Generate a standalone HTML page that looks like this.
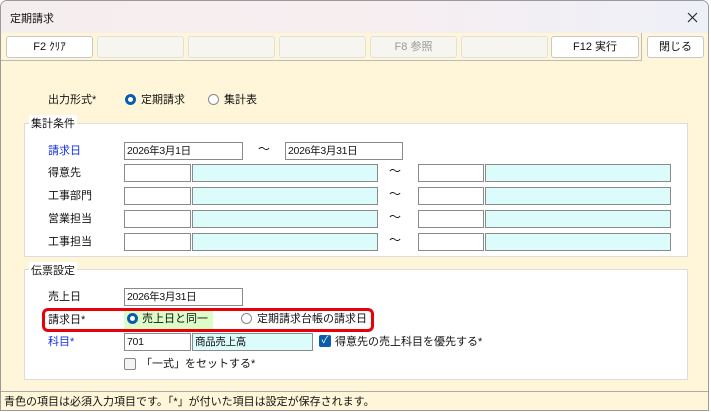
<!DOCTYPE html>
<html><head><meta charset="utf-8"><style>
*{box-sizing:border-box;margin:0;padding:0}
body{width:711px;height:412px;background:#fff;font-family:"Liberation Sans","Noto Sans CJK JP",sans-serif;font-size:11px;color:#111;position:relative;overflow:hidden}
.a{position:absolute}
.win{left:0;top:0;width:709px;height:411px;border:1px solid #9a9a9a;border-radius:7px 7px 0 0;overflow:hidden;background:#fff6da}
.title{left:0;top:0;width:709px;height:32px;background:linear-gradient(90deg,#f5eeee,#f7eef0 50%,#eef0f8);}
.tb{left:0;top:32px;width:641px;height:28px;background:#fff6da;border-right:1px solid #bbb;border-bottom:1px solid #bbb}
.btn{top:35px;height:22px;background:#f7f5f0;border:1px solid #e2e0da;border-radius:3px;text-align:center;line-height:20px;font-size:11px;color:#999}
.btn.on{background:#fff;border-color:#c8c8c8;color:#111}
.grp{background:#fff;border:1px solid #dcdcdc}
.gl{background:#fff;padding:0 2px;font-size:11px}
.in{height:18px;background:#fff;border:1px solid #8a8a8a;font-size:10.5px;line-height:16px;padding-left:2px;letter-spacing:-0.3px}
.in.c{background:#dcfcfc}
.rad{width:11px;height:11px;border:1px solid #888;border-radius:50%;background:#fff}
.rad.on{border:3px solid #0b5cad}
.blue{color:#1030e0}
.til{font-size:12px}
.l{margin-top:-2px}
</style></head><body>
<div class="a win">
<div class="a title"></div>
<div class="a" style="left:9px;top:9px;font-size:11px">定期請求</div>
<svg class="a" style="left:686px;top:11px" width="11" height="11"><path d="M1 1L10 10M10 1L1 10" stroke="#222" stroke-width="1.1"/></svg>
<div class="a tb"></div>
<div class="a btn on" style="left:5px;width:87px">F2 ｸﾘｱ</div>
<div class="a btn" style="left:96px;width:87px"></div>
<div class="a btn" style="left:187px;width:87px"></div>
<div class="a btn" style="left:278px;width:87px"></div>
<div class="a btn" style="left:369px;width:87px">F8 参照</div>
<div class="a btn" style="left:460px;width:87px"></div>
<div class="a btn on" style="left:550px;width:88px">F12 実行</div>
<div class="a btn on" style="left:646px;width:57px">閉じる</div>

<div class="a l" style="left:47px;top:92px">出力形式*</div>
<div class="a rad on" style="left:124px;top:93px"></div>
<div class="a l" style="left:140px;top:92px">定期請求</div>
<div class="a rad" style="left:207px;top:93px"></div>
<div class="a l" style="left:223px;top:92px">集計表</div>

<div class="a grp" style="left:23px;top:122px;width:664px;height:134px"></div>
<div class="a gl" style="left:28px;top:114px">集計条件</div>
<div class="a blue l" style="left:47px;top:143px">請求日</div>
<div class="a in" style="left:123px;top:141px;width:119px">2026年3月1日</div>
<div class="a til l" style="left:257px;top:141px">～</div>
<div class="a in" style="left:284px;top:141px;width:118px">2026年3月31日</div>

<div class="a l" style="left:47px;top:165px">得意先</div>
<div class="a l" style="left:47px;top:188px">工事部門</div>
<div class="a l" style="left:47px;top:211px">営業担当</div>
<div class="a l" style="left:47px;top:234px">工事担当</div>

<div class="a" style="left:0;top:163px">
 <div class="a in" style="left:123px;top:0;width:67px"></div><div class="a in c" style="left:191px;top:0;width:186px"></div>
 <div class="a til l" style="left:388px;top:0">～</div>
 <div class="a in" style="left:417px;top:0;width:66px"></div><div class="a in c" style="left:484px;top:0;width:186px"></div>
</div>
<div class="a" style="left:0;top:186px">
 <div class="a in" style="left:123px;top:0;width:67px"></div><div class="a in c" style="left:191px;top:0;width:186px"></div>
 <div class="a til l" style="left:388px;top:0">～</div>
 <div class="a in" style="left:417px;top:0;width:66px"></div><div class="a in c" style="left:484px;top:0;width:186px"></div>
</div>
<div class="a" style="left:0;top:209px">
 <div class="a in" style="left:123px;top:0;width:67px"></div><div class="a in c" style="left:191px;top:0;width:186px"></div>
 <div class="a til l" style="left:388px;top:0">～</div>
 <div class="a in" style="left:417px;top:0;width:66px"></div><div class="a in c" style="left:484px;top:0;width:186px"></div>
</div>
<div class="a" style="left:0;top:232px">
 <div class="a in" style="left:123px;top:0;width:67px"></div><div class="a in c" style="left:191px;top:0;width:186px"></div>
 <div class="a til l" style="left:388px;top:0">～</div>
 <div class="a in" style="left:417px;top:0;width:66px"></div><div class="a in c" style="left:484px;top:0;width:186px"></div>
</div>

<div class="a grp" style="left:23px;top:268px;width:664px;height:111px"></div>
<div class="a gl" style="left:28px;top:261px">伝票設定</div>
<div class="a l" style="left:47px;top:289px">売上日</div>
<div class="a in" style="left:123px;top:287px;width:119px">2026年3月31日</div>
<div class="a" style="left:41px;top:307px;width:332px;height:24px;border:3px solid #e8000a;border-radius:6px"></div>
<div class="a l" style="left:47px;top:312px">請求日*</div>
<div class="a" style="left:123px;top:310px;width:89px;height:18px;background:#dcfcc8"></div>
<div class="a rad on" style="left:126px;top:312px"></div>
<div class="a l" style="left:141px;top:311px">売上日と同一</div>
<div class="a rad" style="left:240px;top:312px"></div>
<div class="a l" style="left:256px;top:311px">定期請求台帳の請求日</div>
<div class="a blue l" style="left:47px;top:334px">科目*</div>
<div class="a in" style="left:123px;top:332px;width:67px">701</div>
<div class="a in c" style="left:191px;top:332px;width:121px">商品売上高</div>
<div class="a" style="left:318px;top:334px;width:12px;height:12px;background:#0b5cad;border-radius:2px;color:#fff;font-size:10px;line-height:12px;text-align:center">✓</div>
<div class="a l" style="left:334px;top:334px">得意先の売上科目を優先する*</div>
<div class="a" style="left:123px;top:357px;width:12px;height:12px;border:1px solid #888;border-radius:2px;background:#f4f4f4"></div>
<div class="a l" style="left:140px;top:356px">「一式」をセットする*</div>

<div class="a" style="left:0;top:390px;width:709px;height:21px;background:#fff6da;border-top:1px solid #aaa"></div>
<div class="a" style="left:3px;top:392px">青色の項目は必須入力項目です。「*」が付いた項目は設定が保存されます。</div>
</div>
</body></html>
